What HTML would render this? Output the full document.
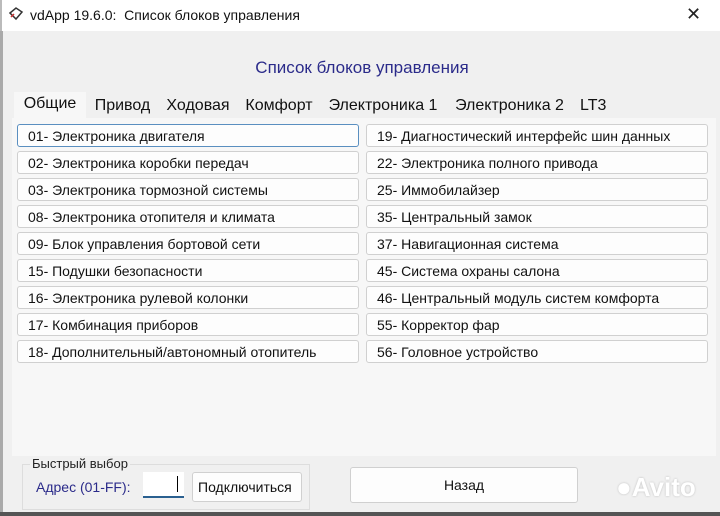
<!DOCTYPE html>
<html><head><meta charset="utf-8"><style>
body{margin:0;width:720px;height:516px;overflow:hidden;background:#f0f0f0;font-family:"Liberation Sans",sans-serif;position:relative}
.t{position:absolute}
.title{left:0;top:0;width:720px;height:31px;background:#fff;border-left:2px solid #bbb}
.btn{position:absolute;height:23px;background:#fdfdfd;border:1px solid #d0d0d0;border-radius:3px;font-size:14px;line-height:23px;padding-left:10px;box-sizing:border-box;color:#111}
.tab{position:absolute;top:94px;height:24px;font-size:16px;line-height:24px;text-align:center;color:#111;background:#f0f0f0}
</style></head><body>
<div class="t title"></div>
<div class="t" style="left:0;top:31px;width:3px;height:485px;background:#aaa"></div>
<svg class="t" style="left:8px;top:6px" width="16" height="16" viewBox="0 0 16 16"><path d="M2 7 L8 2 L14 6 L8 13 Z" fill="none" stroke="#333" stroke-width="1.5"/><path d="M3 11 L6 8" stroke="#c33" stroke-width="1.5"/></svg>
<div class="t" style="left:30px;top:7px;font-size:14px;color:#111">vdApp 19.6.0:&nbsp; Список блоков управления</div>
<div class="t" style="left:686px;top:4px;font-size:18px;color:#222">✕</div>
<div class="t" style="left:0;width:724px;top:58px;text-align:center;font-size:17px;color:#2b2b8a">Список блоков управления</div>
<div class="tab" style="left:14px;width:72px;top:92px;height:27px;background:#f7f7f7">Общие</div>
<div class="tab" style="left:88px;width:69px">Привод</div>
<div class="tab" style="left:159px;width:78px">Ходовая</div>
<div class="tab" style="left:239px;width:80px">Комфорт</div>
<div class="tab" style="left:321px;width:124px">Электроника 1</div>
<div class="tab" style="left:447px;width:125px">Электроника 2</div>
<div class="tab" style="left:574px;width:56px;text-align:left;padding-left:6px;box-sizing:border-box">LT3</div>
<div class="t" style="left:12px;top:118px;width:704px;height:338px;background:#f7f7f7"></div>
<div class="btn" style="left:17px;top:124px;width:342px;border-color:#5a8fc0">01- Электроника двигателя</div>
<div class="btn" style="left:17px;top:151px;width:342px">02- Электроника коробки передач</div>
<div class="btn" style="left:17px;top:178px;width:342px">03- Электроника тормозной системы</div>
<div class="btn" style="left:17px;top:205px;width:342px">08- Электроника отопителя и климата</div>
<div class="btn" style="left:17px;top:232px;width:342px">09- Блок управления бортовой сети</div>
<div class="btn" style="left:17px;top:259px;width:342px">15- Подушки безопасности</div>
<div class="btn" style="left:17px;top:286px;width:342px">16- Электроника рулевой колонки</div>
<div class="btn" style="left:17px;top:313px;width:342px">17- Комбинация приборов</div>
<div class="btn" style="left:17px;top:340px;width:342px">18- Дополнительный/автономный отопитель</div>
<div class="btn" style="left:366px;top:124px;width:342px">19- Диагностический интерфейс шин данных</div>
<div class="btn" style="left:366px;top:151px;width:342px">22- Электроника полного привода</div>
<div class="btn" style="left:366px;top:178px;width:342px">25- Иммобилайзер</div>
<div class="btn" style="left:366px;top:205px;width:342px">35- Центральный замок</div>
<div class="btn" style="left:366px;top:232px;width:342px">37- Навигационная система</div>
<div class="btn" style="left:366px;top:259px;width:342px">45- Система охраны салона</div>
<div class="btn" style="left:366px;top:286px;width:342px">46- Центральный модуль систем комфорта</div>
<div class="btn" style="left:366px;top:313px;width:342px">55- Корректор фар</div>
<div class="btn" style="left:366px;top:340px;width:342px">56- Головное устройство</div>
<div class="t" style="left:22px;top:464px;width:288px;height:46px;border:1px solid #ddd;box-sizing:border-box"></div>
<div class="t" style="left:30px;top:456px;font-size:13px;color:#222;background:#f0f0f0;padding:0 2px">Быстрый выбор</div>
<div class="t" style="left:36px;top:479px;font-size:14px;color:#2b2b8a">Адрес (01-FF):</div>
<div class="t" style="left:143px;top:472px;width:41px;height:26px;background:#fff;border-bottom:2px solid #2a6090;box-sizing:border-box"><div style="position:absolute;left:34px;top:4px;width:1px;height:16px;background:#000"></div></div>
<div class="btn" style="left:192px;top:472px;width:110px;height:30px;line-height:28px;padding-left:5px">Подключиться</div>
<div class="btn" style="left:350px;top:467px;width:228px;height:36px;line-height:34px;padding:0;text-align:center">Назад</div>
<div class="t" style="left:616px;top:472px;font-size:26px;font-weight:bold;color:#fff;text-shadow:0 0 2px #bbb">●Avito</div>
<div class="t" style="left:0;top:512px;width:720px;height:4px;background:#555"></div>
</body></html>
